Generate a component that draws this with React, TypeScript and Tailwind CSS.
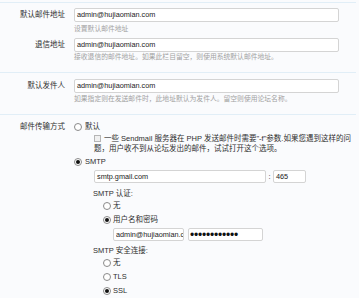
import React from 'react';

const Radio = ({ checked }: { checked?: boolean }) => (
  <span className="w-[8px] h-[8px] rounded-full border border-[#8a8a8a] bg-white flex items-center justify-center shrink-0">
    {checked && <span className="w-[4px] h-[4px] rounded-full bg-[#111]" />}
  </span>
);

const TextBox = ({ value, className }: { value: string; className: string }) => (
  <div
    className={`bg-white border border-[#d4d4d4] rounded-[2px] pl-[2px] text-[7.3px] text-[#222] leading-none flex items-center overflow-hidden whitespace-nowrap ${className}`}
  >
    {value}
  </div>
);

const App: React.FC = () => {
  return (
    <div className="w-[359px] h-[298px] overflow-hidden bg-[#fafbfd] text-[#2e2e2e] font-['Liberation_Sans','Noto_Sans_CJK_SC',sans-serif]">
      {/* Mail addresses */}
      <div className="mt-[2px] mr-[3px] border-t border-[#e1eef7] pb-[11px]">
        <div className="flex pt-[5px]">
          <div className="w-[65px] shrink-0 text-right text-[7.5px] leading-[14px]">默认邮件地址</div>
          <div className="ml-[9px]">
            <TextBox value="admin@hujiaomian.com" className="w-[265px] h-[14px]" />
            <p className="mt-[2px] text-[6.8px] leading-[9px] text-[#a2a2a2]">设置默认邮件地址</p>
          </div>
        </div>
        <div className="flex mt-[5px]">
          <div className="w-[65px] shrink-0 text-right text-[7.5px] leading-[14px]">退信地址</div>
          <div className="ml-[9px]">
            <TextBox value="admin@hujiaomian.com" className="w-[265px] h-[14px]" />
            <p className="text-[6.8px] leading-[9px] text-[#a2a2a2]">接收退信的邮件地址。如果此栏目留空，则使用系统默认邮件地址。</p>
          </div>
        </div>
      </div>

      {/* Sender */}
      <div className="mr-[3px] border-t border-[#e1eef7] pt-[6px] pb-[11px]">
        <div className="flex">
          <div className="w-[65px] shrink-0 text-right text-[7.5px] leading-[14px]">默认发件人</div>
          <div className="ml-[9px]">
            <TextBox value="admin@hujiaomian.com" className="w-[265px] h-[14px]" />
            <p className="mt-[1px] text-[6.8px] leading-[9px] text-[#a2a2a2]">如果指定则在发送邮件时，此地址默认为发件人。留空则使用论坛名称。</p>
          </div>
        </div>
      </div>

      {/* Transport */}
      <div className="mr-[3px] border-t border-[#e1eef7] pt-[7px]">
        <div className="flex">
          <div className="w-[65px] shrink-0 text-right text-[7.5px] leading-[10px]">邮件传输方式</div>
          <div className="ml-[9px] text-[7.5px]">
            <div className="flex items-center gap-[3px] h-[10px]">
              <Radio />
              <span>默认</span>
            </div>
            <div className="mt-[2px] ml-[20px] leading-[10px] whitespace-nowrap">
              <span className="inline-block align-[-1px] w-[7px] h-[7px] border border-[#b5b5b5] bg-[#f0f0f0] mr-[3px]" />
              一些 Sendmail 服务器在 PHP 发送邮件时需要"-f"参数.如果您遇到这样的问
              <br />
              题，用户收不到从论坛发出的邮件，试试打开这个选项。
            </div>
            <div className="mt-[3px] flex items-center gap-[3px] h-[10px]">
              <Radio checked />
              <span>SMTP</span>
            </div>
            <div className="ml-[20px]">
              <div className="mt-[3px] flex items-center">
                <TextBox value="smtp.gmail.com" className="w-[172px] h-[13px]" />
                <span className="w-[7px] text-center">:</span>
                <TextBox value="465" className="w-[33px] h-[13px]" />
              </div>
              <div className="mt-[6px] leading-[10px] -ml-[1px]">SMTP 认证:</div>
              <div className="ml-[9px]">
                <div className="flex items-center gap-[2px] h-[14px]">
                  <Radio />
                  <span>无</span>
                </div>
                <div className="flex items-center gap-[2px] h-[14px]">
                  <Radio checked />
                  <span>用户名和密码</span>
                </div>
                <div className="mt-[1px] ml-[10px] flex items-center gap-[4px]">
                  <input
                    readOnly
                    value="admin@hujiaomian.com"
                    className="w-[71px] h-[13px] bg-white border border-[#d4d4d4] rounded-[2px] pl-[2px] p-0 text-[7.3px] text-[#222] leading-none outline-none"
                  />
                  <div className="w-[75px] h-[13px] bg-white border border-[#d4d4d4] rounded-[2px] pl-[1px] flex items-center overflow-hidden">
                    <span className="text-[12px] leading-none tracking-[-0.2px] text-[#111]">••••••••••••</span>
                  </div>
                </div>
              </div>
              <div className="mt-[5px] leading-[10px] -ml-[1px]">SMTP 安全连接:</div>
              <div className="ml-[9px]">
                <div className="flex items-center gap-[2px] h-[14px]">
                  <Radio />
                  <span>无</span>
                </div>
                <div className="flex items-center gap-[2px] h-[14px]">
                  <Radio />
                  <span>TLS</span>
                </div>
                <div className="flex items-center gap-[2px] h-[14px]">
                  <Radio checked />
                  <span>SSL</span>
                </div>
              </div>
            </div>
          </div>
        </div>
      </div>
    </div>
  );
};

export default App;
